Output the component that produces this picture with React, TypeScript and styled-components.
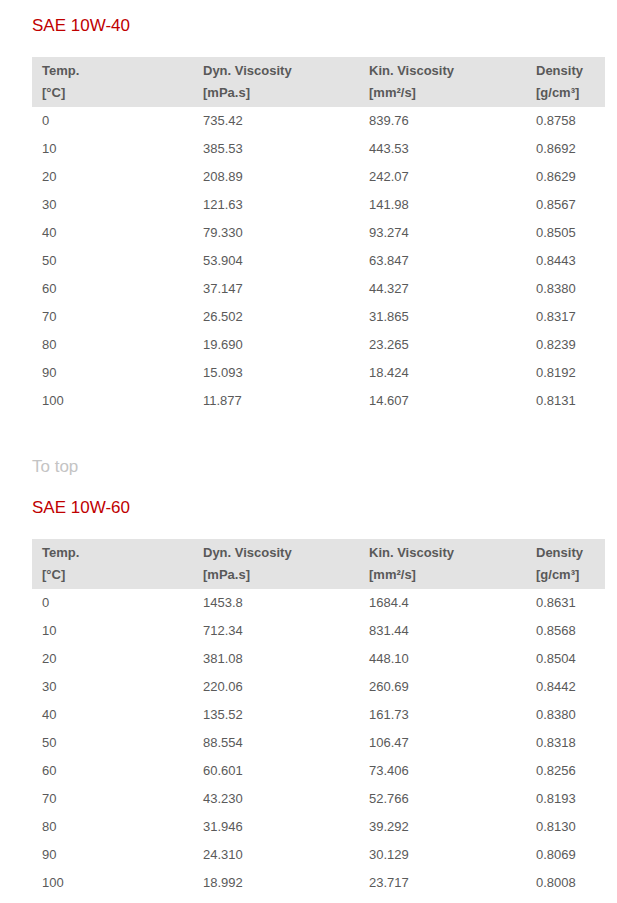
import React from 'react';
import styled, { createGlobalStyle } from 'styled-components';

const GlobalStyle = createGlobalStyle`
    body {
        margin: 0;
        background: #ffffff;
        font-family: "Liberation Sans", Arial, sans-serif;
    }
`;

const StyledPage = styled.div`
    padding: 16px 12px 0 32px;
    width: 573px;
`;

const StyledTitle = styled.h2`
    margin: 0;
    height: 20px;
    line-height: 20px;
    font-size: 17px;
    font-weight: normal;
    color: #c00000;
`;

const StyledTable = styled.table`
    width: 573px;
    margin-top: 21px;
    border-collapse: collapse;
    table-layout: fixed;
    font-size: 13px;
`;

const StyledHeadCell = styled.th<{ $width: number }>`
    width: ${(p) => p.$width}px;
    padding: 3px 10px;
    background: #e3e3e3;
    color: #595959;
    font-weight: bold;
    line-height: 22px;
    text-align: left;
`;

const StyledCell = styled.td`
    height: 28px;
    padding: 0 10px;
    color: #5a5a5a;
    line-height: 28px;
`;

const StyledTopLink = styled.a`
    display: block;
    margin-top: 42px;
    height: 20px;
    line-height: 20px;
    font-size: 17px;
    color: #c4c4c4;
    text-decoration: none;
`;

const StyledSection = styled.section<{ $gap: number }>`
    margin-top: ${(p) => p.$gap}px;
`;

// widths are content widths; each cell adds 20px of padding
const columns = [
    { width: 141, title: 'Temp.', unit: '[°C]' },
    { width: 146, title: 'Dyn. Viscosity', unit: '[mPa.s]' },
    { width: 147, title: 'Kin. Viscosity', unit: '[mm²/s]' },
    { width: 59, title: 'Density', unit: '[g/cm³]' },
];

const oils = [
    {
        name: 'SAE 10W-40',
        rows: [
            ['0', '735.42', '839.76', '0.8758'],
            ['10', '385.53', '443.53', '0.8692'],
            ['20', '208.89', '242.07', '0.8629'],
            ['30', '121.63', '141.98', '0.8567'],
            ['40', '79.330', '93.274', '0.8505'],
            ['50', '53.904', '63.847', '0.8443'],
            ['60', '37.147', '44.327', '0.8380'],
            ['70', '26.502', '31.865', '0.8317'],
            ['80', '19.690', '23.265', '0.8239'],
            ['90', '15.093', '18.424', '0.8192'],
            ['100', '11.877', '14.607', '0.8131'],
        ],
    },
    {
        name: 'SAE 10W-60',
        rows: [
            ['0', '1453.8', '1684.4', '0.8631'],
            ['10', '712.34', '831.44', '0.8568'],
            ['20', '381.08', '448.10', '0.8504'],
            ['30', '220.06', '260.69', '0.8442'],
            ['40', '135.52', '161.73', '0.8380'],
            ['50', '88.554', '106.47', '0.8318'],
            ['60', '60.601', '73.406', '0.8256'],
            ['70', '43.230', '52.766', '0.8193'],
            ['80', '31.946', '39.292', '0.8130'],
            ['90', '24.310', '30.129', '0.8069'],
            ['100', '18.992', '23.717', '0.8008'],
        ],
    },
];

function OilTable({ name, rows }: { name: string; rows: string[][] }) {
    return (
        <>
            <StyledTitle>{name}</StyledTitle>
            <StyledTable>
                <thead>
                    <tr>
                        {columns.map((c) => (
                            <StyledHeadCell key={c.title} $width={c.width}>
                                {c.title}
                                <br />
                                {c.unit}
                            </StyledHeadCell>
                        ))}
                    </tr>
                </thead>
                <tbody>
                    {rows.map((r) => (
                        <tr key={r[0]}>
                            {r.map((v, i) => (
                                <StyledCell key={i}>{v}</StyledCell>
                            ))}
                        </tr>
                    ))}
                </tbody>
            </StyledTable>
        </>
    );
}

function App() {
    return (
        <StyledPage>
            <GlobalStyle />
            <OilTable name={oils[0].name} rows={oils[0].rows} />
            <StyledTopLink href='#'>To top</StyledTopLink>
            <StyledSection $gap={21}>
                <OilTable name={oils[1].name} rows={oils[1].rows} />
            </StyledSection>
        </StyledPage>
    );
}

export default App;
